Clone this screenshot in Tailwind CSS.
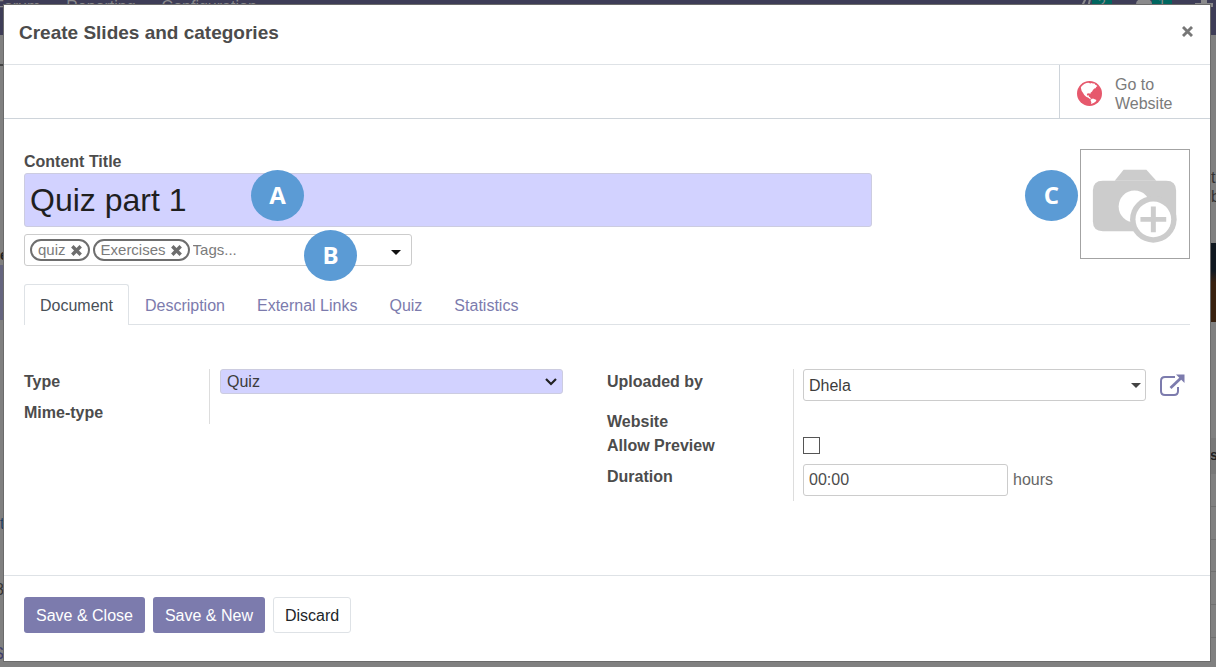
<!DOCTYPE html>
<html lang="en">
<head>
<meta charset="utf-8">
<title>Create Slides and categories</title>
<script src="https://cdn.jsdelivr.net/npm/@tailwindcss/browser@4"></script>
</head>
<body class="bg-[#808080] font-['Liberation_Sans',Arial,sans-serif] text-base text-[#4c4c4c]">
<div class="relative flex min-h-screen overflow-hidden pt-[5px] pr-[6px] pb-[6px] pl-[4px]">

  <!-- Dimmed page behind the dialog -->
  <div class="absolute inset-0" aria-hidden="true">
    <div class="flex h-[35px] items-start justify-between bg-[#3e3d57] text-[#8a8a8c]">
      <div class="flex gap-[26px] leading-[14px]">
        <span class="-ml-[6px]">Forum</span><span>Reporting</span><span>Configuration</span>
      </div>
      <div class="flex items-start leading-[10px]">
        <svg class="h-3 w-3" viewBox="0 0 12 12" fill="none" stroke="#8a8a8c" stroke-width="2"><path d="M3 8V4l3-6M8 8l2-9"/></svg>
        <span class="mr-[24px] h-3 w-5 bg-[#00665f] text-center text-sm leading-[6px]">2</span>
        <svg class="h-3 w-4" viewBox="0 0 16 12" fill="#8a8a8c"><ellipse cx="8" cy="4" rx="8" ry="6"/></svg>
        <span class="mr-[23px] h-3 w-5 bg-[#00665f] text-center text-sm leading-[6px]">1</span>
        <svg class="h-3 w-[18px]" viewBox="0 0 18 12" fill="#8a8a8c"><path d="M0 3h6V0h6v3h6v4h-2v5H2V7H0z"/></svg>
        <span class="w-[3px]"></span>
      </div>
    </div>
    <div class="absolute top-[265px] left-0 h-[55px] w-1 bg-[#65657f]"></div>
    <div class="absolute top-[64px] left-0 h-[2px] w-1 bg-[#444]"></div>
    <div class="absolute top-[245px] left-0 w-1 overflow-hidden text-sm font-bold text-[#222]">e</div>
    <div class="absolute top-[512px] left-0 w-1 overflow-hidden text-[#1d3f63]">t</div>
    <div class="absolute top-[578px] left-0 flex w-1 justify-end overflow-hidden text-[#333]">8</div>
    <div class="absolute top-[642px] left-0 flex w-1 justify-end overflow-hidden text-[#3e3d6b]">S</div>
    <div class="absolute top-[168px] right-0 w-[5px] overflow-hidden leading-[19px] text-[#333]">t<br>b</div>
    <div class="absolute top-[243px] right-0 h-[79px] w-[6px] bg-linear-to-b from-[#101820] from-35% to-[#38210f] to-50%"></div>
    <div class="absolute top-[438px] right-0 h-[36px] w-[6px] bg-[#787878]"></div>
    <div class="absolute top-[445px] right-0 w-[6px] overflow-hidden text-sm font-bold text-[#222]">s</div>
    <div class="absolute top-[506px] right-0 h-px w-[6px] bg-[#6f6f6f]"></div>
    <div class="absolute top-[539px] right-0 h-px w-[6px] bg-[#6f6f6f]"></div>
    <div class="absolute top-[571px] right-0 h-px w-[6px] bg-[#6f6f6f]"></div>
    <div class="absolute top-[604px] right-0 h-px w-[6px] bg-[#6f6f6f]"></div>
    <div class="absolute top-[637px] right-0 h-px w-[6px] bg-[#6f6f6f]"></div>
  </div>

  <div role="dialog" aria-labelledby="dlg-title" class="relative flex flex-1 flex-col bg-white shadow-[0_0_0_1px_#6b6b6b]">
    <header class="flex h-[60px] items-center justify-between border-b border-[#dee2e6] pr-4 pl-[15px]">
      <h1 id="dlg-title" class="pb-[2px] text-[19px] font-bold">Create Slides and categories</h1>
      <button type="button" aria-label="Close" class="mb-[6px] p-[1px]">
        <svg class="h-[11px] w-[11px]" viewBox="0 0 10 10" stroke="#777" stroke-width="2.600"><path d="M.9.9l8.200 8.200M9.100.9L.9 9.100"/></svg>
      </button>
    </header>

    <div class="flex h-[54px] justify-end border-b border-[#ced4da]">
      <button type="button" class="flex w-[151px] items-center gap-[13px] border-l border-[#ced4da] pt-[4px] pl-[17px] text-left leading-[19px] text-[#7b7b7b]">
        <svg class="h-[25px] w-[25px] shrink-0" viewBox="0 0 24 24"><circle cx="12" cy="12" r="12" fill="#e6586c"/><path fill="#fff" d="M4.400 5.100C6 3.200 8.500 1.900 11 1.700L12.800 2.300L14 1.800L15.200 2.500L16.800 2.500L17.600 3.600L19 4.200L19.500 5.300L18 5.700L18.400 6.600L16.700 7.300L15.300 8.600L14.500 10L13 11.200L12.800 12.500L11.700 11.700L9.900 12L9.400 13.500L10.500 14.200L11.500 13.700L11.400 15L12.600 15.600L12.900 16.800L14.200 17.200L12.700 17.500L10.900 16L8.800 15L7 13.500L5.700 11.200L4.500 9.500L4 7.600L3.700 6.200zM13.700 17.500L15.300 16.900L17 17.500L18.700 18.300L17.800 19.800L15.900 21.200L13.400 22L13.800 20.300L13 18.800z"/></svg>
        <span>Go to<br>Website</span>
      </button>
    </div>

    <main class="flex-1 px-5 pt-[30px]">
      <div class="flex">
        <div class="mr-[208px] flex-1">
          <label for="title" class="block h-6 pt-px leading-6 font-bold">Content Title</label>
          <div class="relative">
            <input id="title" type="text" value="Quiz part 1" class="block h-[54px] w-full rounded-[3px] border border-[#cccce0] bg-[#d2d2ff] px-[5px] text-[32px] text-[#1f1f1f]">
            <span class="absolute top-[-3px] left-[227px] flex h-[51px] w-[53px] items-center justify-center rounded-[50%] bg-[#5b9bd5] pb-[2px] font-['Open_Sans',sans-serif] text-2xl font-bold text-white">A</span>
          </div>
          <div class="relative mt-[7px] flex h-[32px] w-[388px] items-center rounded-[3px] border border-[#ccc] px-[5px] text-[15px] text-[#7b7b7b]">
            <span class="mr-[3px] flex h-[22px] items-center gap-[5px] rounded-full border-2 border-[#6e6e6e] px-[6px] leading-[18px]">quiz
              <button type="button" aria-label="Remove quiz"><svg class="h-[11px] w-[11px]" viewBox="0 0 11 11" stroke="#6e6e6e" stroke-width="3.400"><path d="M1.300 1.300l8.400 8.400M9.700 1.300L1.300 9.700"/></svg></button>
            </span>
            <span class="mr-[3px] flex h-[22px] items-center gap-[5px] rounded-full border-2 border-[#6e6e6e] px-[6px] leading-[18px]">Exercises
              <button type="button" aria-label="Remove Exercises"><svg class="h-[11px] w-[11px]" viewBox="0 0 11 11" stroke="#6e6e6e" stroke-width="3.400"><path d="M1.300 1.300l8.400 8.400M9.700 1.300L1.300 9.700"/></svg></button>
            </span>
            <input type="text" aria-label="Tags" placeholder="Tags..." class="min-w-0 flex-1 placeholder:text-[#7b7b7b]">
            <svg class="mt-[5px] mr-[5px] h-[5px] w-[10px]" viewBox="0 0 10 5" fill="#111"><path d="M0 0h10L5 5z"/></svg>
            <span class="absolute top-[-5px] left-[279px] flex h-[51px] w-[53px] items-center justify-center rounded-[50%] bg-[#5b9bd5] pb-[2px] font-['Open_Sans',sans-serif] text-2xl font-bold text-white">B</span>
          </div>
        </div>
        <div class="relative h-[110px] w-[110px] border border-[#a3a3a3]">
          <button type="button" aria-label="Upload image" class="block h-full w-full">
            <svg class="h-full w-full" viewBox="0 0 109 109">
              <path fill="#ccc" d="M43 20h23l10 11h-42z"/>
              <path fill="#ccc" d="M22 31h64q10 0 10 10v30q0 11-11 11H22q-10 0-10-10V41q0-10 10-10z"/>
              <circle cx="54" cy="57" r="16" fill="#fff"/>
              <circle cx="73" cy="70" r="23.500" fill="#ccc"/>
              <circle cx="73" cy="70" r="18" fill="#fff"/>
              <path stroke="#ccc" stroke-width="5" d="M73 57v26M60 70h26"/>
            </svg>
          </button>
          <span class="absolute top-[20px] left-[-56px] flex h-[51px] w-[53px] items-center justify-center rounded-[50%] bg-[#5b9bd5] pb-[2px] font-['Open_Sans',sans-serif] text-2xl font-bold text-white">C</span>
        </div>
      </div>

      <nav role="tablist" class="mt-[18px] flex h-[41px] border-b border-[#dee2e6] text-[#7c7bad]">
        <button type="button" role="tab" aria-selected="true" class="-mb-px rounded-t-[3px] border border-b-0 border-[#dee2e6] bg-white px-[15px] pt-[2px] text-[#495057]">Document</button>
        <button type="button" role="tab" class="px-4 pt-[3px]">Description</button>
        <button type="button" role="tab" class="px-4 pt-[3px]">External Links</button>
        <button type="button" role="tab" class="px-4 pt-[3px]">Quiz</button>
        <button type="button" role="tab" class="px-4 pt-[3px]">Statistics</button>
      </nav>

      <div class="mt-[44px] grid grid-cols-2 items-start leading-6">
        <div class="flex">
          <div class="flex w-[185px] flex-col gap-[7px] pt-px font-bold">
            <label for="type">Type</label>
            <span>Mime-type</span>
          </div>
          <div class="mr-[44px] h-[55px] flex-1 border-l border-[#ddd] pl-[10px]">
            <div class="relative">
              <select id="type" class="block h-[25px] w-full appearance-none rounded-[3px] border border-[#cccce0] bg-[#d2d2ff] px-[6px] pt-px leading-[22px] text-[#3c3c3c]"><option>Quiz</option></select>
              <svg class="pointer-events-none absolute top-[9px] right-[6px] h-[8px] w-[12px]" viewBox="0 0 12 8" fill="none" stroke="#222" stroke-width="2.200"><path d="M1 1l5 5 5-5"/></svg>
            </div>
          </div>
        </div>

        <div class="flex">
          <div class="flex w-[186px] flex-col pt-px font-bold">
            <label for="user" class="mb-4">Uploaded by</label>
            <span>Website</span>
            <label for="preview" class="mb-[7px]">Allow Preview</label>
            <label for="duration">Duration</label>
          </div>
          <div class="flex-1 border-l border-[#ddd] pr-[5px] pb-[5px] pl-[9px]">
            <div class="mb-[36px] flex items-center">
              <div class="relative flex-1">
                <input id="user" type="text" value="Dhela" class="block h-[32px] w-full rounded-[3px] border border-[#ccc] px-[5px] pt-px text-[#3c3c3c]">
                <svg class="pointer-events-none absolute top-[14px] right-[5px] h-[5px] w-[10px]" viewBox="0 0 10 5" fill="#444"><path d="M0 0h10L5 5z"/></svg>
              </div>
              <button type="button" aria-label="External link" class="ml-[14px]">
                <svg class="h-[22px] w-[25px]" viewBox="0 0 25 22" fill="none" stroke="#7c7bad"><path stroke-width="2" d="M15 3H5q-4 0-4 4v10q0 4 4 4h9q4 0 4-4v-4"/><path stroke-width="2.800" d="M10.500 14L21 4"/><path fill="#7c7bad" stroke="none" d="M16 .5h8.500V9z"/></svg>
              </button>
            </div>
            <input id="preview" type="checkbox" class="block h-[17px] w-[17px] appearance-none border border-[#555] bg-white">
            <div class="mt-[10px] flex items-center gap-[5px]">
              <input id="duration" type="text" value="00:00" class="block h-[32px] w-[205px] rounded-[3px] border border-[#ccc] px-[5px]">
              <span class="text-[#666]">hours</span>
            </div>
          </div>
        </div>
      </div>
    </main>

    <footer class="flex h-[86px] items-start gap-2 border-t border-[#dee2e6] px-5 pt-[21px]">
      <button type="button" class="h-[36px] rounded-[3px] bg-[#7c7bad] px-3 pt-px text-white">Save &amp; Close</button>
      <button type="button" class="h-[36px] rounded-[3px] bg-[#7c7bad] px-3 pt-px text-white">Save &amp; New</button>
      <button type="button" class="h-[36px] rounded-[3px] border border-[#dee2e6] bg-white px-[11px] pt-px text-[#212529]">Discard</button>
    </footer>
  </div>
</div>
</body>
</html>
